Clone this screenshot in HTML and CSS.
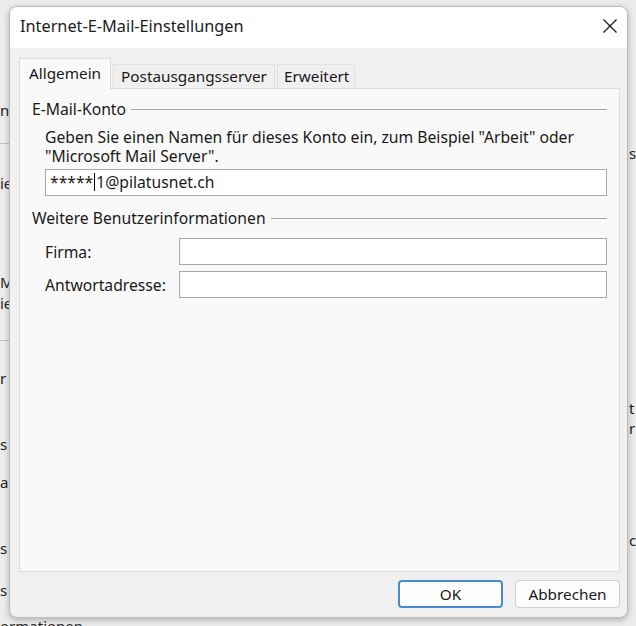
FILE: index.html
```html
<!DOCTYPE html>
<html lang="de">
<head>
    <meta charset="UTF-8">
    <title>Internet-E-Mail-Einstellungen</title>
    <link rel="stylesheet" href="styles.css">
</head>
<body>
    <!-- Fenster dahinter -->
    <div class="backdrop">
        <span class="frag left" style="top:100px">n</span>
        <span class="frag left" style="top:173px">ie</span>
        <span class="frag left" style="top:272px">M</span>
        <span class="frag left" style="top:293px">ie</span>
        <span class="frag left" style="top:368px">r</span>
        <span class="frag left" style="top:434px">s</span>
        <span class="frag left" style="top:472px">a</span>
        <span class="frag left" style="top:538px">s</span>
        <span class="frag left" style="top:580px">s</span>
        <span class="frag right" style="top:143px">s</span>
        <span class="frag right" style="top:398px">t</span>
        <span class="frag right" style="top:418px">r</span>
        <span class="frag right" style="top:530px">c</span>
        <div class="bottom-strip"><span>ormationen</span></div>
        <div class="bline" style="top:143px"></div>
        <div class="bline" style="top:340px"></div>
    </div>

    <div class="dialog">
        <div class="titlebar">
            <span class="title">Internet-E-Mail-Einstellungen</span>
            <svg class="close" width="16" height="16" viewBox="0 0 16 16">
                <path d="M1.5 1.5 L14.5 14.5 M14.5 1.5 L1.5 14.5" stroke="#1b1b1b" stroke-width="1.3" fill="none"/>
            </svg>
        </div>

        <div class="content">
            <div class="tabs">
                <div class="tab active">Allgemein</div>
                <div class="tab">Postausgangsserver</div>
                <div class="tab last">Erweitert</div>
            </div>

            <div class="panel">
                <div class="group-head">
                    <span>E-Mail-Konto</span>
                    <div class="rule"></div>
                </div>
                <div class="group-body">
                    <p class="hint">Geben Sie einen Namen für dieses Konto ein, zum Beispiel "Arbeit" oder<br>"Microsoft Mail Server".</p>
                    <div class="field wide">*****<span class="caret"></span>1@pilatusnet.ch</div>
                </div>

                <div class="group-head second">
                    <span>Weitere Benutzerinformationen</span>
                    <div class="rule"></div>
                </div>
                <div class="group-body form">
                    <label>Firma:</label>
                    <div class="field"></div>
                    <label>Antwortadresse:</label>
                    <div class="field"></div>
                </div>
            </div>

            <div class="buttons">
                <button class="btn primary">OK</button>
                <button class="btn">Abbrechen</button>
            </div>
        </div>
    </div>
</body>
</html>
```

FILE: styles.css
```css
body {
    margin: 0;
    width: 636px;
    height: 626px;
    overflow: hidden;
    position: relative;
    background-color: #ececec;
    font-family: "Noto Sans", "Open Sans", sans-serif;
    font-size: 15.7px;
    color: #1a1a1a;
}

/* Fenster im Hintergrund */
.backdrop {
    position: absolute;
    inset: 0;
}

.frag {
    position: absolute;
    white-space: nowrap;
    font-size: 15px;
    color: #222;
}

.frag.left {
    left: 0;
}

.frag.right {
    left: 629px;
}

.bottom-strip {
    position: absolute;
    left: 0;
    top: 617px;
    width: 120px;
    height: 9px;
    overflow: hidden;
}

.bottom-strip span {
    display: block;
    font-size: 15px;
    line-height: 16px;
    color: #222;
    margin-top: 1px;
}

.bline {
    position: absolute;
    left: 0;
    width: 12px;
    height: 1px;
    background-color: #bdbdbd;
}

/* Dialog */
.dialog {
    position: absolute;
    left: 9px;
    top: 6px;
    width: 617px;
    height: 610px;
    border: 1px solid #bcbcbc;
    border-radius: 8px;
    background-color: #f0f0f0;
    box-shadow: 0 2px 6px rgba(0, 0, 0, 0.25);
    overflow: hidden;
    display: flex;
    flex-direction: column;
}

.titlebar {
    height: 41px;
    box-sizing: border-box;
    background-color: #fff;
    display: flex;
    align-items: center;
    justify-content: space-between;
    padding: 0 9px 3px 10px;
    flex-shrink: 0;
}

.title {
    font-size: 16.3px;
    color: #1b1b1b;
}

.content {
    flex: 1;
    padding: 10px 7px 0 9px;
    display: flex;
    flex-direction: column;
}

.tabs {
    display: flex;
    align-items: flex-end;
    height: 30px;
}

.tab {
    height: 24px;
    line-height: 22px;
    padding: 0 7px;
    margin-right: 2px;
    border: 1px solid #e2e2e2;
    border-bottom: none;
    background-color: #f0f0f0;
    box-sizing: border-box;
    font-size: 15.3px;
}

.tab.last {
    padding: 0 5px 0 6px;
}

.tab.active {
    height: 31px;
    line-height: 28px;
    padding: 0 9px;
    background-color: #f9f9f9;
    border-color: #dcdcdc;
    margin-bottom: -1px;
    position: relative;
    z-index: 1;
}

.panel {
    height: 484px;
    box-sizing: border-box;
    border: 1px solid #dcdcdc;
    background-color: #f9f9f9;
    padding: 10px 12px 0 12px;
}

.group-head {
    display: flex;
    align-items: center;
    height: 20px;
}

.group-head.second {
    margin-top: 12px;
}

.rule {
    flex: 1;
    height: 1px;
    background-color: #a6a6a6;
    margin-left: 5px;
    margin-top: 1px;
}

.group-body {
    padding-left: 13px;
}

.hint {
    margin: 9px 0 3px 0;
    line-height: 19px;
}

.field {
    height: 27px;
    box-sizing: border-box;
    border: 1px solid #a9a9a9;
    background-color: #fff;
    line-height: 25px;
    padding-left: 4px;
}

.caret {
    display: inline-block;
    width: 1px;
    height: 18px;
    background-color: #000;
    vertical-align: -3px;
    margin: 0 1px;
}

.form {
    margin-top: 10px;
    display: grid;
    grid-template-columns: 134px 1fr;
    row-gap: 6px;
    align-items: center;
}

/* Schaltflächen */
.buttons {
    display: flex;
    justify-content: flex-end;
    gap: 12px;
    padding-top: 8px;
}

.btn {
    width: 105px;
    height: 28px;
    font-family: inherit;
    font-size: 15.3px;
    color: #1a1a1a;
    background-color: #fdfdfd;
    border: 1px solid #d0d0d0;
    border-radius: 4px;
    padding: 0;
}

.btn.primary {
    border: 2px solid #4a8ad0;
}
```
